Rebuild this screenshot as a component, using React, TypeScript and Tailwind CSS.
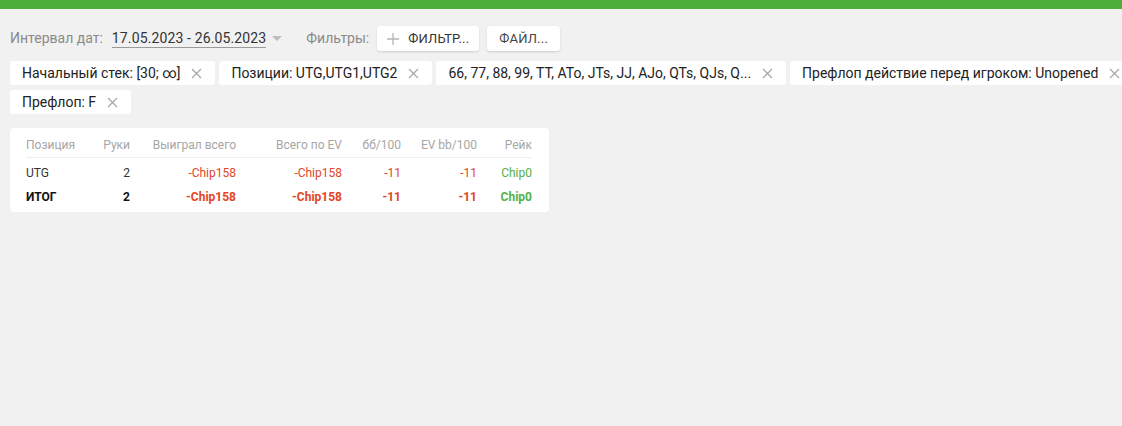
import React from "react";

const chips = [
  "Начальный стек: [30; ∞]",
  "Позиции: UTG,UTG1,UTG2",
  "66, 77, 88, 99, TT, ATo, JTs, JJ, AJo, QTs, QJs, Q...",
  "Префлоп действие перед игроком: Unopened",
  "Префлоп: F",
];

const rows = [
  { pos: "UTG", hands: "2", won: "-Chip158", ev: "-Chip158", bb: "-11", evbb: "-11", rake: "Chip0", bold: false },
  { pos: "ИТОГ", hands: "2", won: "-Chip158", ev: "-Chip158", bb: "-11", evbb: "-11", rake: "Chip0", bold: true },
];

function CloseIcon() {
  return (
    <svg width="11" height="11" viewBox="0 0 11 11" className="shrink-0">
      <path d="M1 1L10 10M10 1L1 10" stroke="#a8a8a8" strokeWidth="1.3" />
    </svg>
  );
}

function Chip({ label }: { label: string }) {
  return (
    <div className="flex h-[24px] items-center gap-[11px] rounded-[3px] bg-white pl-[12px] pr-[13px] text-[14px] text-[#222] whitespace-nowrap">
      <span>{label}</span>
      <CloseIcon />
    </div>
  );
}

const grid = "grid grid-cols-[60px_44px_106px_106px_59px_76px_55px]";

export default function App() {
  return (
    <div className="min-h-screen w-full overflow-hidden bg-[#f1f1f1] font-['Roboto',sans-serif]">
      <div className="h-[9px] bg-[#4eae3a]" />

      <div className="px-[10px]">
        {/* date range + filters */}
        <div className="mt-[17px] flex h-[25px] items-center">
          <span className="text-[14px] text-[#8a8a8a]">Интервал дат:</span>
          <span className="ml-[9px] border-b border-[#9a9a9a] leading-[18px] text-[14px] tracking-[0.13px] text-[#333]">
            17.05.2023 - 26.05.2023
          </span>
          <svg width="10" height="6" viewBox="0 0 10 6" className="ml-[6px]">
            <path d="M0 0H10L5 5Z" fill="#bdbdbd" />
          </svg>
          <span className="ml-[24px] text-[14px] text-[#8a8a8a]">Фильтры:</span>
          <button className="ml-[8px] flex h-[25px] items-center gap-[9px] rounded-[3px] bg-white pl-[10px] pr-[10px] text-[13px] tracking-[0.2px] text-[#333] shadow-[0_1px_2px_rgba(0,0,0,0.15)]">
            <svg width="12" height="12" viewBox="0 0 12 12">
              <path d="M6 0V12M0 6H12" stroke="#b5b5b5" strokeWidth="1.3" />
            </svg>
            ФИЛЬТР...
          </button>
          <button className="ml-[8px] flex h-[25px] items-center rounded-[3px] bg-white px-[12px] text-[13px] tracking-[0.2px] text-[#444] shadow-[0_1px_2px_rgba(0,0,0,0.15)]">
            ФАЙЛ...
          </button>
        </div>

        {/* active filter chips */}
        <div className="mt-[10px] flex w-[1200px] flex-wrap gap-x-[4px] gap-y-[5px]">
          {chips.map((c) => (
            <Chip key={c} label={c} />
          ))}
        </div>

        {/* stats table */}
        <div className="mt-[14px] w-[539px] rounded-[4px] bg-white pb-[3px] pl-[16px] pr-[17px] pt-[5px] text-[12px]">
          <div className={`${grid} h-[25px] items-center border-b border-[#eeeeee] text-[#a6a6a6]`}>
            <span>Позиция</span>
            <span className="text-right">Руки</span>
            <span className="text-right">Выиграл всего</span>
            <span className="text-right">Всего по EV</span>
            <span className="text-right">бб/100</span>
            <span className="text-right">EV bb/100</span>
            <span className="text-right">Рейк</span>
          </div>
          <div className="pt-[3px]">
            {rows.map((r) => (
              <div
                key={r.pos}
                className={`${grid} h-[24px] items-center ${r.bold ? "font-bold text-[#111]" : "text-[#333]"}`}
              >
                <span>{r.pos}</span>
                <span className="text-right">{r.hands}</span>
                <span className="text-right text-[#e2461f]">{r.won}</span>
                <span className="text-right text-[#e2461f]">{r.ev}</span>
                <span className="text-right text-[#e2461f]">{r.bb}</span>
                <span className="text-right text-[#e2461f]">{r.evbb}</span>
                <span className="text-right text-[#54b048]">{r.rake}</span>
              </div>
            ))}
          </div>
        </div>
      </div>
    </div>
  );
}
